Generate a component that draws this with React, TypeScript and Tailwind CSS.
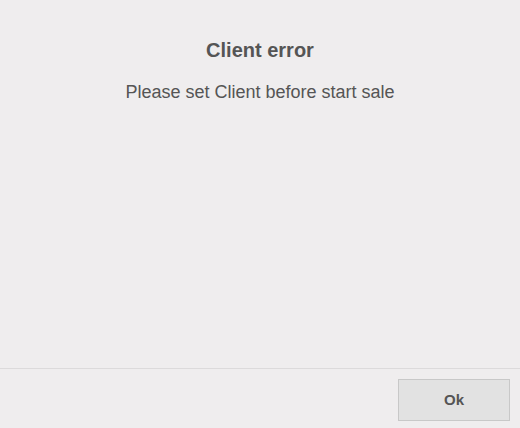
export default function App() {
  return (
    <div className="flex h-[428px] w-[520px] flex-col bg-[#efedee] text-[#555555]" style={{ fontFamily: '"Liberation Sans", Arial, sans-serif' }}>
      <div className="flex flex-1 flex-col items-center pt-[38px]">
        <div className="text-[20px] font-bold leading-[24px]">Client error</div>
        <div className="mt-[19px] text-[18px] leading-[22px]">Please set Client before start sale</div>
      </div>
      <div className="flex h-[60px] justify-end border-t border-[#dcdadb] pt-[10px] pr-[10px]">
        <button className="h-[42px] w-[112px] border border-[#c8c8c8] bg-[#e2e2e2] text-[15px] font-bold text-[#555555]">Ok</button>
      </div>
    </div>
  );
}
